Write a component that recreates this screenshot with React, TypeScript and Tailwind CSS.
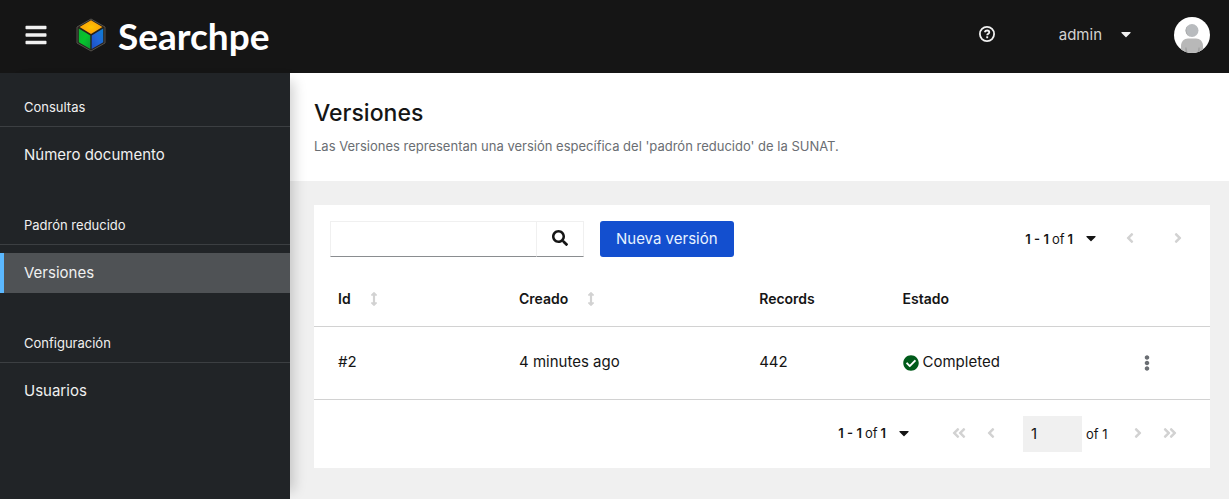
import type { ReactNode } from "react";
import {
  FaAngleDoubleLeft,
  FaAngleDoubleRight,
  FaAngleLeft,
  FaAngleRight,
  FaArrowsAltV,
  FaBars,
  FaCaretDown,
  FaCheckCircle,
  FaEllipsisV,
  FaSearch,
} from "react-icons/fa";

const sections = [
  { title: "Consultas", items: ["Número documento"] },
  { title: "Padrón reducido", items: ["Versiones"] },
  { title: "Configuración", items: ["Usuarios"] },
];

const versions = [
  { id: "#2", created: "4 minutes ago", records: 442, state: "Completed" },
];

function CubeLogo() {
  return (
    <svg viewBox="0 0 30 34" className="h-[34px] w-[30px]" aria-hidden="true">
      <defs>
        <radialGradient id="top" cx="0.5" cy="0.5" r="0.6">
          <stop offset="0" stopColor="#ffc400" />
          <stop offset="1" stopColor="#fb9a0c" />
        </radialGradient>
        <linearGradient id="left" x1="0" y1="0" x2="1" y2="1">
          <stop offset="0" stopColor="#0fae35" />
          <stop offset="0.5" stopColor="#06c52c" />
          <stop offset="1" stopColor="#0c9a35" />
        </linearGradient>
        <linearGradient id="right" x1="0" y1="1" x2="1" y2="0">
          <stop offset="0" stopColor="#1c4fc4" />
          <stop offset="0.5" stopColor="#2166d8" />
          <stop offset="1" stopColor="#0b7fd0" />
        </linearGradient>
      </defs>
      <path d="M15 1 29 9v16l-14 8L1 25V9z" fill="#26221c" stroke="#55514c" strokeWidth="1" />
      <path d="M15 2.2 26.4 9 15 16 3.600 9z" fill="url(#top)" />
      <path d="M2.800 10.600 14.300 17.400V31L2.800 24.300z" fill="url(#left)" />
      <path d="M27.200 10.600 15.700 17.400V31L27.200 24.300z" fill="url(#right)" />
    </svg>
  );
}

function HelpIcon() {
  return (
    <svg viewBox="0 0 16 16" className="size-4" fill="none" stroke="currentColor" aria-hidden="true">
      <circle cx="8" cy="8" r="7.100" strokeWidth="1.800" />
      <path d="M5.700 6.300C6.100 5 7 4.500 8.100 4.500c1.300 0 2.200.7 2.200 1.800 0 1.500-2.100 1.500-2.100 3" strokeWidth="1.800" />
      <path d="M8.200 10.300v1.900" strokeWidth="1.900" />
    </svg>
  );
}

function Avatar() {
  return (
    <svg viewBox="0 0 36 36" className="size-9 rounded-full" role="img" aria-label="Avatar">
      <rect width="36" height="36" fill="#fff" />
      <circle cx="18" cy="13.500" r="6.500" fill="#b8bbbe" />
      <path d="M13.500 9A6.500 6.500 0 0 0 16 19.700 7.500 7.500 0 0 1 13.500 9z" fill="#a0a0a0" />
      <path d="M7 36v-7c0-4.500 3-7.500 7-7.500h8c4 0 7 3 7 7.500v7z" fill="#b8b8b8" />
      <path d="M11.300 30.500h1.200l1 5.500h-2.200zM24.500 30.500h1.200V36h-2.200z" fill="#a0a0a0" />
    </svg>
  );
}

function RangeToggle() {
  return (
    <button type="button" className="flex h-9 items-center gap-[10px]" aria-label="Items per page">
      <span className="flex gap-[3px] whitespace-nowrap pt-px text-[13px]">
        <b className="font-semibold">1 - 1</b>of<b className="font-semibold">1</b>
      </span>
      <FaCaretDown size={16} className="mb-[2px]" />
    </button>
  );
}

function PageButton({ label, className, children }: { label: string; className: string; children: ReactNode }) {
  return (
    <button
      type="button"
      disabled
      aria-label={label}
      className={`flex h-9 items-center justify-center text-[#d2d2d2] ${className}`}
    >
      {children}
    </button>
  );
}

export default function App() {
  return (
    <div className="flex min-h-screen flex-col bg-[#f0f0f0] font-['Inter',sans-serif] text-[15px] text-[#151515]">
      <header className="flex h-[73px] items-center bg-[#151515] pr-[19px] pb-[3px] pl-6 text-[#f0f0f0]">
        <button type="button" aria-label="Menú" className="w-6">
          <FaBars size={24} />
        </button>
        <a href="#" className="ml-[28px] flex items-center gap-3 text-white">
          <CubeLogo />
          <span className="font-['Lato',sans-serif] text-[37px] leading-none font-bold">Searchpe</span>
        </a>
        <div className="ml-auto flex items-center">
          <button type="button" aria-label="Ayuda" className="mr-16 pb-[2px]">
            <HelpIcon />
          </button>
          <button type="button" className="mr-10 flex items-center gap-4 text-[#d2d2d2]">
            admin
            <FaCaretDown size={16} className="mb-[2px] text-[#f0f0f0]" />
          </button>
          <Avatar />
        </div>
      </header>

      <div className="flex grow">
        <nav
          aria-label="Global"
          className="relative z-10 flex w-[290px] shrink-0 flex-col gap-10 bg-[#212427] pt-6 text-[#f0f0f0] shadow-[12px_0_12px_-8px_rgba(3,3,3,0.18)]"
        >
          {sections.map((section) => (
            <section key={section.title}>
              <h2 className="border-b border-[#3c3f42] px-6 pb-2 text-[13px] leading-[21px]">{section.title}</h2>
              <ul className="pt-2">
                {section.items.map((item) => (
                  <li key={item}>
                    <a
                      href="#"
                      className={
                        item === "Versiones"
                          ? "block border-l-4 border-[#5bb8ff] bg-[#4f5255] py-2 pl-5 leading-6"
                          : "block py-2 pl-6 leading-6"
                      }
                    >
                      {item}
                    </a>
                  </li>
                ))}
              </ul>
            </section>
          ))}
        </nav>

        <main className="min-w-0 grow">
          <div className="bg-white p-6">
            <h1 className="text-[23px] leading-8 font-medium">Versiones</h1>
            <p className="mt-[7px] text-[13px] leading-[21px] text-[#6a6e73]">
              Las Versiones representan una versión específica del 'padrón reducido' de la SUNAT.
            </p>
          </div>

          <div className="py-6 pr-[19px] pl-6">
            <div className="bg-white">
              <div className="flex items-center py-4 pr-2 pl-4">
                <form className="flex">
                  <input
                    type="search"
                    aria-label="Buscar"
                    className="h-9 w-[207px] border border-[#f0f0f0] border-b-[#8a8d90] px-2 outline-none"
                  />
                  <button
                    type="button"
                    aria-label="Buscar"
                    className="flex h-9 w-[47px] items-center justify-center border border-l-0 border-[#f0f0f0] border-b-[#8a8d90] pb-[2px]"
                  >
                    <FaSearch size={16} />
                  </button>
                </form>
                <button type="button" className="ml-4 h-9 rounded-[3px] bg-[#134fcf] px-4 text-[#e8f3ff]">
                  Nueva versión
                </button>
                <div className="ml-auto flex items-center">
                  <RangeToggle />
                  <PageButton label="Anterior" className="ml-[7px] w-12 pb-[2px]">
                    <FaAngleLeft size={16} />
                  </PageButton>
                  <PageButton label="Siguiente" className="w-12 pb-[2px]">
                    <FaAngleRight size={16} />
                  </PageButton>
                </div>
              </div>

              <table className="w-full table-fixed text-left">
                <thead>
                  <tr className="h-[53px] border-b border-[#d2d2d2] text-sm">
                    <th scope="col" className="w-[21.1%] pl-6 font-semibold">
                      <button type="button" className="flex items-center gap-4">
                        Id <FaArrowsAltV size={14} className="text-[#d2d2d2]" />
                      </button>
                    </th>
                    <th scope="col" className="w-[26.8%] pl-4 font-semibold">
                      <button type="button" className="flex items-center gap-4">
                        Creado <FaArrowsAltV size={14} className="text-[#d2d2d2]" />
                      </button>
                    </th>
                    <th scope="col" className="w-[16%] pl-4 font-semibold">Records</th>
                    <th scope="col" className="pl-4 font-semibold">Estado</th>
                    <td className="w-[14%]" />
                  </tr>
                </thead>
                <tbody>
                  {versions.map((version) => (
                    <tr key={version.id} className="h-[73px] border-b border-[#d2d2d2]">
                      <td className="pl-6">{version.id}</td>
                      <td className="pl-4">{version.created}</td>
                      <td className="pl-4">{version.records}</td>
                      <td className="pl-4">
                        <span className="flex items-center gap-1">
                          <FaCheckCircle size={16} className="text-[#005b1a]" />
                          {version.state}
                        </span>
                      </td>
                      <td>
                        <button type="button" aria-label="Acciones" className="mx-auto block px-4 py-2 text-[#6a6e73]">
                          <FaEllipsisV size={16} />
                        </button>
                      </td>
                    </tr>
                  ))}
                </tbody>
              </table>

              <div className="flex items-center justify-end py-4 pr-6">
                <RangeToggle />
                <PageButton label="Primera página" className="ml-[31px] w-8 pb-[2px]">
                  <FaAngleDoubleLeft size={16} />
                </PageButton>
                <PageButton label="Página anterior" className="w-8 pb-[2px]">
                  <FaAngleLeft size={16} />
                </PageButton>
                <label className="ml-4 flex items-center gap-1 text-[13px]">
                  <input
                    type="text"
                    aria-label="Página actual"
                    defaultValue="1"
                    disabled
                    className="h-9 w-[59px] bg-[#f0f0f0] px-2 text-[15px]"
                  />
                  <span className="w-9 pt-[2px]">of 1</span>
                </label>
                <PageButton label="Página siguiente" className="w-8 pb-[2px]">
                  <FaAngleRight size={16} />
                </PageButton>
                <PageButton label="Última página" className="w-8 pb-[2px]">
                  <FaAngleDoubleRight size={16} />
                </PageButton>
              </div>
            </div>
          </div>
        </main>
      </div>
    </div>
  );
}
